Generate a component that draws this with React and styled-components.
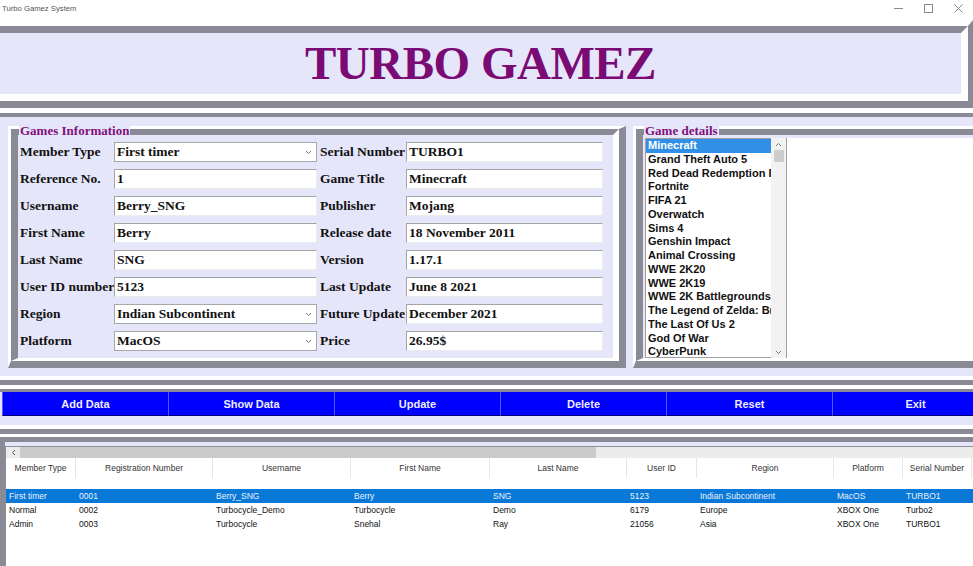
import React from "react";
import styled, { createGlobalStyle } from "styled-components";

const LAV = "#e6e6fa";
const DARK = "#8a8a96";
const SERIF = `"Liberation Serif", "Times New Roman", serif`;
const SANS = `"Liberation Sans", Arial, sans-serif`;

const GlobalStyle = createGlobalStyle`
  html, body { margin: 0; padding: 0; background: ${LAV}; overflow: hidden; }
  #root { width: 973px; height: 566px; }
`;

const Window = styled.div`
  width: 973px;
  height: 566px;
  display: flex;
  flex-direction: column;
  background: ${LAV};
  overflow: hidden;
`;

const TitleBar = styled.div`
  height: 20px;
  flex: none;
  background: #fff;
  display: flex;
  align-items: flex-start;
  justify-content: space-between;
  padding-left: 2px;
`;

const AppName = styled.span`
  font: 7.7px ${SANS};
  color: #555;
  margin-top: 4px;
`;

const Controls = styled.div`
  display: flex;
`;

const Ctl = styled.div`
  width: 30px;
  height: 16px;
  display: flex;
  align-items: center;
  justify-content: center;
`;

const HeaderFrame = styled.div`
  flex: none;
  border-style: solid;
  border-width: 6px 5px 7px 0;
  border-color: #fff ${DARK} ${DARK} transparent;
`;

const HeaderInner = styled.div`
  height: 61px;
  border-style: solid;
  border-width: 7px 7px 7px 0;
  border-color: ${DARK} #fff #fff transparent;
  display: flex;
  align-items: center;
  justify-content: center;
`;

const Title = styled.h1`
  margin: 0;
  font: bold 47px/1 ${SERIF};
  letter-spacing: -0.5px;
  color: #7a0a74;
`;

const Band = styled.div`
  flex: none;
  border-style: solid;
  border-width: ${(p) => p.$outer} 0;
  border-color: #fff transparent ${DARK};
`;

const BandInner = styled.div`
  border-style: solid;
  border-width: ${(p) => p.$inner} 0;
  border-color: ${DARK} transparent #fff;
  display: flex;
  padding: ${(p) => p.$pad || "0"};
  gap: ${(p) => p.$gap || "0"};
`;

const GroupOuter = styled.div`
  position: relative;
  flex: ${(p) => (p.$grow ? "1" : "none")};
  margin-right: ${(p) => p.$mr || "0"};
  border-style: solid;
  border-width: 3px 7px 7px 3px;
  border-color: #fff ${DARK} ${DARK} #fff;
`;

const GroupInner = styled.div`
  border-style: solid;
  border-width: 6px 6px 3px 7px;
  border-color: ${DARK} #fff #fff ${DARK};
  padding: ${(p) => p.$pad};
  display: ${(p) => (p.$grid ? "grid" : "flex")};
  grid-template-columns: 94px 203px 89px 197px;
  grid-auto-rows: 20px;
  row-gap: 7px;
  align-items: ${(p) => (p.$grid ? "center" : "stretch")};
`;

const Legend = styled.span`
  position: absolute;
  top: -6px;
  left: ${(p) => p.$left};
  padding: 0 1px;
  background: ${LAV};
  font: bold 13px/15px ${SERIF};
  color: #80107c;
`;

const FieldLabel = styled.span`
  font: bold 13.5px ${SERIF};
  color: #111;
  white-space: nowrap;
  padding-left: ${(p) => (p.$right ? "3px" : "0")};
`;

const Entry = styled.div`
  height: 20px;
  box-sizing: border-box;
  background: #fff;
  border: 1px solid;
  border-color: #a4a4a4 #ececec #ececec #a4a4a4;
  font: bold 13.5px/18px ${SERIF};
  color: #111;
  padding-left: 2px;
  white-space: nowrap;
  overflow: hidden;
`;

const Combo = styled.div`
  height: 20px;
  box-sizing: border-box;
  background: #fff;
  border: 1px solid #a8a8a8;
  font: bold 13.5px/18px ${SERIF};
  color: #111;
  padding-left: 2px;
  display: flex;
  align-items: center;
  justify-content: space-between;
  padding-right: 4px;
`;

const ListBox = styled.div`
  width: 126px;
  height: 220px;
  box-sizing: border-box;
  background: #fff;
  border: 1px solid #a0a0a0;
  border-right: none;
  margin-left: 2px;
  margin-top: 3px;
  overflow: hidden;
`;

const ListItem = styled.div`
  font: bold 11px/13.75px ${SANS};
  height: 13.75px;
  padding-left: 2px;
  white-space: nowrap;
  overflow: hidden;
  color: ${(p) => (p.$sel ? "#fff" : "#111")};
  background: ${(p) => (p.$sel ? "#3190e6" : "transparent")};
`;

const VScroll = styled.div`
  width: 15px;
  height: 220px;
  margin-top: 3px;
  background: #f2f2f2;
  display: flex;
  flex-direction: column;
  align-items: center;
`;

const Arrow = styled.div`
  height: 12px;
  width: 100%;
  display: flex;
  align-items: center;
  justify-content: center;
`;

const VThumb = styled.div`
  width: 10px;
  height: 12px;
  background: #cdcdcd;
`;

const Spacer = styled.div`
  flex: 1;
`;

const TextArea = styled.div`
  flex: 1;
  height: 220px;
  margin-top: 3px;
  background: #fff;
  border-left: 1px solid #a0a0a0;
`;

const ButtonRow = styled.div`
  display: grid;
  grid-template-columns: repeat(6, 166px);
  height: 24px;
`;

const Btn = styled.button`
  all: unset;
  box-sizing: border-box;
  height: 24px;
  background: #0000ff;
  color: #ececfa;
  font: bold 11px ${SANS};
  text-align: center;
  border-left: 1px solid #5656ff;
  border-bottom: 1px solid #00007a;
`;

const TableFrame = styled.div`
  flex: 1;
  display: flex;
  border-top: 3px solid #fff;
`;

const TableInner = styled.div`
  flex: 1;
  display: flex;
  border-style: solid;
  border-width: 5px 0 0 5px;
  border-color: ${DARK};
  padding-top: 4px;
  background: ${LAV};
`;

const Table = styled.div`
  flex: 1;
  background: #fff;
  border-top: 1px solid #8f8f98;
  border-left: 1px solid #8f8f98;
`;

const HScroll = styled.div`
  height: 11px;
  display: flex;
  background: #ececec;
`;

const HArrow = styled.div`
  width: 14px;
  display: flex;
  align-items: center;
  justify-content: center;
`;

const HThumb = styled.div`
  width: 576px;
  background: #cbcbcb;
`;

const Cols = "70px 137px 138px 139px 137px 70px 137px 69px 69px";

const HeaderRow = styled.div`
  display: grid;
  grid-template-columns: ${Cols};
  height: 20px;
  margin-bottom: 11px;
`;

const HeadCell = styled.div`
  font: 8.5px/20px ${SANS};
  color: #333;
  text-align: center;
  border-right: 1px solid #e6e6e6;
  white-space: nowrap;
`;

const Row = styled.div`
  display: grid;
  grid-template-columns: ${Cols};
  height: 14px;
  background: ${(p) => (p.$sel ? "#0a78d6" : "transparent")};
`;

const Cell = styled.div`
  font: 8.5px/14px ${SANS};
  color: ${(p) => (p.$sel ? "#e8f2ff" : "#111")};
  padding-left: 3px;
  white-space: nowrap;
  overflow: hidden;
`;

const Chevron = ({ up }) => (
  <svg width="7" height="5" viewBox="0 0 7 5">
    <path
      d={up ? "M1 4 L3.5 1.5 L6 4" : "M1 1 L3.5 3.5 L6 1"}
      fill="none"
      stroke="#777"
      strokeWidth="1"
    />
  </svg>
);

const LeftChevron = () => (
  <svg width="5" height="7" viewBox="0 0 5 7">
    <path d="M4 1 L1.5 3.5 L4 6" fill="none" stroke="#555" strokeWidth="1" />
  </svg>
);

const leftFields = [
  ["Member Type", "First timer", true],
  ["Reference No.", "1"],
  ["Username", "Berry_SNG"],
  ["First Name", "Berry"],
  ["Last Name", "SNG"],
  ["User ID number", "5123"],
  ["Region", "Indian Subcontinent", true],
  ["Platform", "MacOS", true],
];

const rightFields = [
  ["Serial Number", "TURBO1"],
  ["Game Title", "Minecraft"],
  ["Publisher", "Mojang"],
  ["Release date", "18 November 2011"],
  ["Version", "1.17.1"],
  ["Last Update", "June 8 2021"],
  ["Future Update", "December 2021"],
  ["Price", "26.95$"],
];

const games = [
  "Minecraft",
  "Grand Theft Auto 5",
  "Red Dead Redemption II",
  "Fortnite",
  "FIFA 21",
  "Overwatch",
  "Sims 4",
  "Genshin Impact",
  "Animal Crossing",
  "WWE 2K20",
  "WWE 2K19",
  "WWE 2K Battlegrounds",
  "The Legend of Zelda: Breath of the Wild",
  "The Last Of Us 2",
  "God Of War",
  "CyberPunk",
];

const buttons = ["Add Data", "Show Data", "Update", "Delete", "Reset", "Exit"];

const headers = [
  "Member Type",
  "Registration Number",
  "Username",
  "First Name",
  "Last Name",
  "User ID",
  "Region",
  "Platform",
  "Serial Number",
];

const rows = [
  ["First timer", "0001", "Berry_SNG", "Berry", "SNG", "5123", "Indian Subcontinent", "MacOS", "TURBO1"],
  ["Normal", "0002", "Turbocycle_Demo", "Turbocycle", "Demo", "6179", "Europe", "XBOX One", "Turbo2"],
  ["Admin", "0003", "Turbocycle", "Snehal", "Ray", "21056", "Asia", "XBOX One", "TURBO1"],
];

export default function App() {
  return (
    <Window>
      <GlobalStyle />
      <TitleBar>
        <AppName>Turbo Gamez System</AppName>
        <Controls>
          <Ctl>
            <svg width="9" height="9" viewBox="0 0 9 9">
              <path d="M0 4.5 H9" stroke="#888" strokeWidth="1" />
            </svg>
          </Ctl>
          <Ctl>
            <svg width="9" height="9" viewBox="0 0 9 9">
              <rect x="0.5" y="0.5" width="8" height="8" fill="none" stroke="#888" strokeWidth="1" />
            </svg>
          </Ctl>
          <Ctl>
            <svg width="9" height="9" viewBox="0 0 9 9">
              <path d="M0.5 0.5 L8.5 8.5 M8.5 0.5 L0.5 8.5" stroke="#888" strokeWidth="1" />
            </svg>
          </Ctl>
        </Controls>
      </TitleBar>

      <HeaderFrame>
        <HeaderInner>
          <Title>TURBO GAMEZ</Title>
        </HeaderInner>
      </HeaderFrame>

      <Band $outer="5px">
        <BandInner $inner="4px" $pad="9px 0 8px 8px" $gap="7px">
          <GroupOuter>
            <Legend $left="8px">Games Information</Legend>
            <GroupInner $grid $pad="7px 10px 7px 2px">
              {leftFields.map((l, i) => {
                const r = rightFields[i];
                return (
                  <React.Fragment key={l[0]}>
                    <FieldLabel>{l[0]}</FieldLabel>
                    {l[2] ? (
                      <Combo>
                        {l[1]}
                        <Chevron />
                      </Combo>
                    ) : (
                      <Entry>{l[1]}</Entry>
                    )}
                    <FieldLabel $right>{r[0]}</FieldLabel>
                    <Entry>{r[1]}</Entry>
                  </React.Fragment>
                );
              })}
            </GroupInner>
          </GroupOuter>

          <GroupOuter $grow $mr="-30px">
            <Legend $left="8px">Game details</Legend>
            <GroupInner $pad="0">
              <ListBox>
                {games.map((g, i) => (
                  <ListItem key={g} $sel={i === 0}>
                    {g}
                  </ListItem>
                ))}
              </ListBox>
              <VScroll>
                <Arrow>
                  <Chevron up />
                </Arrow>
                <VThumb />
                <Spacer />
                <Arrow>
                  <Chevron />
                </Arrow>
              </VScroll>
              <TextArea />
            </GroupInner>
          </GroupOuter>
        </BandInner>
      </Band>

      <Band $outer="4px 0 5px">
        <BandInner $inner="3px 0 4px" $pad="0 0 9px 2px">
          <ButtonRow>
            {buttons.map((b) => (
              <Btn key={b}>{b}</Btn>
            ))}
          </ButtonRow>
        </BandInner>
      </Band>

      <TableFrame>
        <TableInner>
          <Table>
            <HScroll>
              <HArrow>
                <LeftChevron />
              </HArrow>
              <HThumb />
            </HScroll>
            <HeaderRow>
              {headers.map((h) => (
                <HeadCell key={h}>{h}</HeadCell>
              ))}
            </HeaderRow>
            {rows.map((r, i) => (
              <Row key={i} $sel={i === 0}>
                {r.map((c, j) => (
                  <Cell key={j} $sel={i === 0}>
                    {c}
                  </Cell>
                ))}
              </Row>
            ))}
          </Table>
        </TableInner>
      </TableFrame>
    </Window>
  );
}
